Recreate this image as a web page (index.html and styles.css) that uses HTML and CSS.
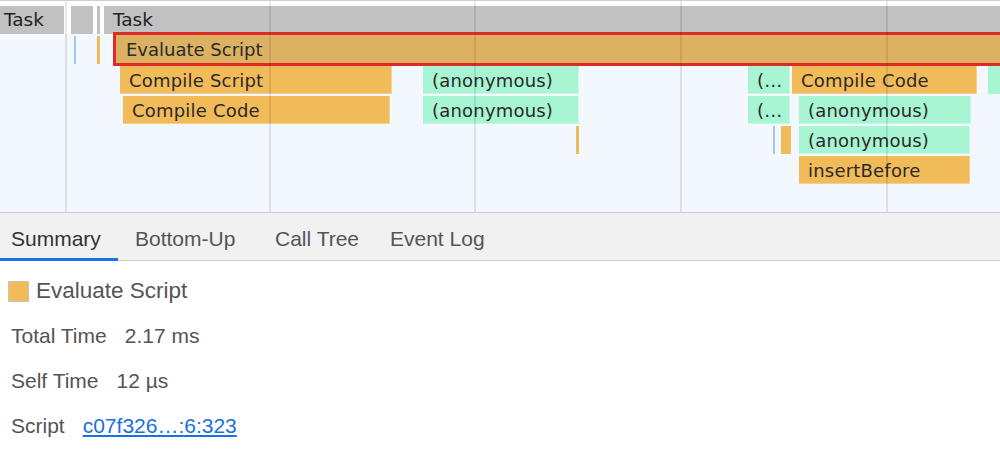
FILE: index.html
```html
<!DOCTYPE html>
<html>
<head>
<meta charset="utf-8">
<link rel="stylesheet" href="styles.css">
</head>
<body>
<div class="flame">
  <div class="topline"></div>
  <div class="bar task" style="left:0;width:64px;top:6px">Task</div>
  <div class="bar task empty" style="left:71px;width:22px;top:6px"></div>
  <div class="bar task empty" style="left:97px;width:3px;top:6px"></div>
  <div class="bar task main" style="left:104px;width:896px;top:6px">Task</div>

  <div class="bar empty blue" style="left:74px;width:2px;top:36px"></div>
  <div class="bar empty orange" style="left:97px;width:3px;top:36px"></div>
  <div class="bar selected" style="left:113px;width:900px;top:32px">Evaluate Script</div>

  <div class="bar orange" style="left:120px;width:272px;top:66px">Compile Script</div>
  <div class="bar green" style="left:423px;width:156px;top:66px">(anonymous)</div>
  <div class="bar green" style="left:748px;width:42px;top:66px">(…</div>
  <div class="bar orange" style="left:792px;width:185px;top:66px">Compile Code</div>
  <div class="bar green empty" style="left:988px;width:12px;top:66px"></div>

  <div class="bar orange" style="left:123px;width:267px;top:96px">Compile Code</div>
  <div class="bar green" style="left:423px;width:156px;top:96px">(anonymous)</div>
  <div class="bar green" style="left:748px;width:42px;top:96px">(…</div>
  <div class="bar green" style="left:799px;width:172px;top:96px">(anonymous)</div>

  <div class="bar orange empty" style="left:576px;width:3px;top:126px"></div>
  <div class="bar empty blue" style="left:773px;width:2px;top:126px"></div>
  <div class="bar orange empty" style="left:781px;width:10px;top:126px"></div>
  <div class="bar green" style="left:799px;width:171px;top:126px">(anonymous)</div>

  <div class="bar orange" style="left:799px;width:171px;top:156px">insertBefore</div>

  <div class="grid" style="left:65px"></div>
  <div class="grid" style="left:269px"></div>
  <div class="grid" style="left:474px"></div>
  <div class="grid" style="left:680px"></div>
  <div class="grid" style="left:886px"></div>
</div>

<div class="tabs">
  <div class="tab active">Summary</div>
  <div class="tab bottomup">Bottom-Up</div>
  <div class="tab calltree">Call Tree</div>
  <div class="tab eventlog">Event Log</div>
</div>

<div class="summary">
  <div class="title"><span class="swatch"></span>Evaluate Script</div>
  <div class="row"><span class="label">Total Time</span><span class="value">2.17 ms</span></div>
  <div class="row"><span class="label">Self Time</span><span class="value">12 µs</span></div>
  <div class="row"><span class="label">Script</span><a class="link" href="#">c07f326…:6:323</a></div>
</div>
</body>
</html>
```

FILE: styles.css
```css
html, body {
  margin: 0;
  padding: 0;
  background: #fff;
}

.flame {
  position: relative;
  height: 212px;
  background: linear-gradient(#fff 0, #fff 34px, #f3f7fe 34px);
  overflow: hidden;
  border-bottom: 1px solid #cbcbcb;
}

.topline {
  height: 1px;
  background: #cfcfcf;
}

.bar {
  position: absolute;
  height: 28px;
  box-sizing: border-box;
  font-family: "DejaVu Sans", sans-serif;
  font-size: 18px;
  letter-spacing: 0.2px;
  line-height: 30px;
  color: #2a2a2a;
  padding-left: 9px;
  white-space: nowrap;
  overflow: hidden;
}

.task {
  background: #c1c1c1;
  padding-left: 4px;
  line-height: 28px;
  font-size: 18.5px;
  letter-spacing: 0;
  color: #222;
}

.task.main {
  padding-left: 9px;
}

.orange {
  background: #f2bb5a;
  border: 1px solid #f7d08e;
  border-width: 0 1px 1px 0;
}

.green {
  background: #a8f5d3;
  border: 1px solid #c8f8e2;
  border-width: 0 1px 1px 0;
}

.bar.empty {
  padding: 0;
  border: 0;
}

.blue {
  background: #a2c6ee;
}

.selected {
  height: 34px;
  background: #dcb262;
  border: 3px solid #e02a2a;
  line-height: 30px;
  padding-left: 10px;
  letter-spacing: 0;
}

.grid {
  position: absolute;
  top: 1px;
  bottom: 0;
  width: 2px;
  background: rgba(0, 0, 0, 0.09);
}

.tabs {
  display: flex;
  height: 47px;
  background: #f1f1f1;
  border-bottom: 1px solid #cbcbcb;
  font-family: "Liberation Sans", Arial, sans-serif;
  font-size: 21px;
}

.tab {
  padding: 0 11px;
  line-height: 52px;
  color: #555;
  box-sizing: border-box;
  height: 48px;
}

.tab.active {
  color: #333;
  width: 118px;
  margin-right: 6px;
  border-bottom: 3px solid #1a73e8;
}

.tab.bottomup {
  width: 140px;
}

.tab.calltree {
  width: 115px;
}

.summary {
  font-family: "Liberation Sans", Arial, sans-serif;
  color: #545454;
  padding: 19px 0 0 8px;
}

.title {
  display: flex;
  align-items: center;
  font-size: 22.5px;
  height: 22px;
}

.swatch {
  display: inline-block;
  width: 19px;
  height: 19px;
  background: #f2bb5a;
  border: 1px solid #c4c4c4;
  margin-right: 7px;
}

.row {
  display: flex;
  font-size: 21px;
  margin-top: 23px;
  height: 22px;
  line-height: 22px;
  padding-left: 3px;
}

.label {
  margin-right: 18px;
}

.link {
  color: #1a6fe3;
  text-decoration: underline;
}
```
